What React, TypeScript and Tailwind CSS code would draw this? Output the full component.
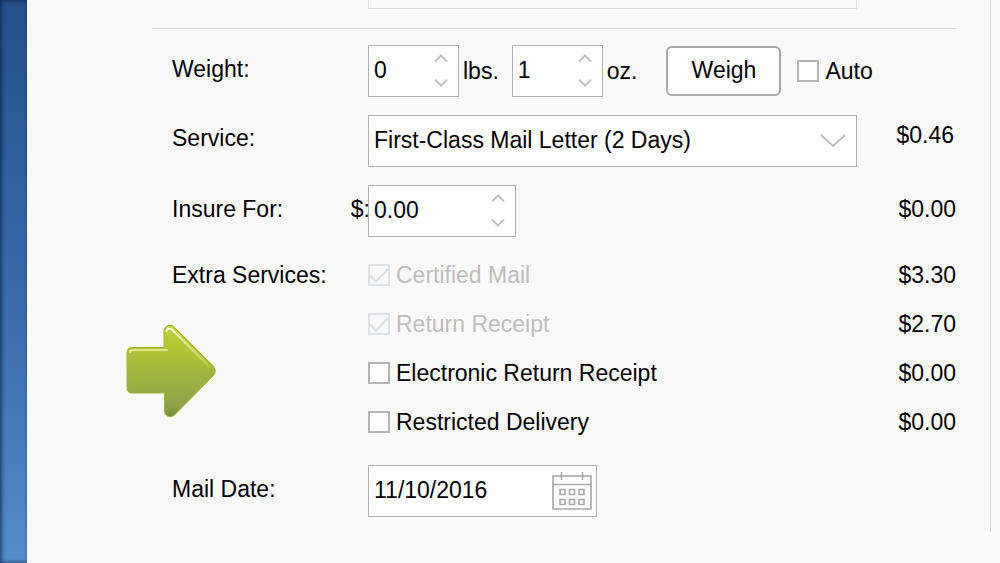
import { useState } from "react";

const SERVICES = ["First-Class Mail Letter (2 Days)", "Priority Mail (2 Days)"];

const EXTRAS = [
  { id: "certified", label: "Certified Mail", price: "$3.30", locked: true },
  { id: "return", label: "Return Receipt", price: "$2.70", locked: true },
  { id: "electronic", label: "Electronic Return Receipt", price: "$0.00", locked: false },
  { id: "restricted", label: "Restricted Delivery", price: "$0.00", locked: false },
];

const boxClass = "h-[52px] border border-[#b0b0b0] bg-white";
const inputClass = "h-full w-full min-w-0 flex-1 bg-transparent pb-0.5 pl-[5px] outline-none";
const rowClass = "grid grid-cols-[196px_minmax(0,1fr)_99px] items-center pl-5";

function Spinner({
  id,
  initial,
  digits = 0,
  className,
}: {
  id: string;
  initial: number;
  digits?: number;
  className: string;
}) {
  const [value, setValue] = useState(initial.toFixed(digits));

  function step(by: number) {
    setValue(Math.max(0, (Number(value) || 0) + by).toFixed(digits));
  }

  return (
    <div className={`flex shrink-0 ${boxClass} ${className}`}>
      <input
        id={id}
        type="text"
        inputMode="decimal"
        value={value}
        onChange={(event) => setValue(event.target.value)}
        className={inputClass}
      />
      <div className="flex w-[34px] shrink-0 flex-col pb-0.5">
        <button
          type="button"
          aria-label="Increase"
          onClick={() => step(1)}
          className="flex flex-1 items-center justify-center"
        >
          <svg width="14" height="9" viewBox="0 0 14 9" fill="none" stroke="#c2bfc2" strokeWidth="2">
            <path d="M1 7.5 7 1.5 13 7.5" />
          </svg>
        </button>
        <button
          type="button"
          aria-label="Decrease"
          onClick={() => step(-1)}
          className="flex flex-1 items-center justify-center"
        >
          <svg width="14" height="9" viewBox="0 0 14 9" fill="none" stroke="#c2bfc2" strokeWidth="2">
            <path d="M1 1.500 7 7.500 13 1.500" />
          </svg>
        </button>
      </div>
    </div>
  );
}

function Checkbox({ id, label, locked = false }: { id: string; label: string; locked?: boolean }) {
  return (
    <div className="flex items-center gap-1.5">
      <span className="relative size-[22px] shrink-0">
        <input
          id={id}
          type="checkbox"
          defaultChecked={locked}
          disabled={locked}
          className="peer block size-[22px] appearance-none border-2 border-[#b4b4b6] bg-white disabled:border-[#dfe2e4] disabled:bg-[#f9f9f9]"
        />
        <svg
          className="pointer-events-none absolute inset-0 hidden text-[#777777] peer-checked:block peer-disabled:text-[#dcdddd]"
          width="22"
          height="22"
          viewBox="0 0 22 22"
          fill="none"
          stroke="currentColor"
          strokeWidth="2"
        >
          <path d="M2 11.5 8 17.5 20 5" />
        </svg>
      </span>
      <label htmlFor={id} className={locked ? "text-[#bdbdbd]" : ""}>
        {label}
      </label>
    </div>
  );
}

function CalendarIcon() {
  return (
    <svg width="40" height="40" viewBox="0 0 40 40" fill="none" stroke="#a8a8a8">
      <path strokeWidth="1.6" d="M1 5h38v33H1zM1 13.500h38" />
      <path strokeWidth="1.6" d="M9.5 1v8M30.5 1v8" />
      <path
        strokeWidth="1.6"
        d="M8 18.5h5v5H8zM17.5 18.5h5v5h-5zM27 18.5h5v5h-5zM8 28.5h5v5H8zM17.5 28.5h5v5h-5zM27 28.5h5v5h-5z"
      />
    </svg>
  );
}

function Arrow() {
  return (
    <svg width="90" height="93" viewBox="0 0 90 93" fill="none" aria-hidden="true">
      <defs>
        <linearGradient id="arrowFill" x1="0" y1="0" x2="0" y2="1">
          <stop offset="0" stopColor="#bfd02f" />
          <stop offset="0.3" stopColor="#b0c338" />
          <stop offset="0.7" stopColor="#97ac42" />
          <stop offset="0.9" stopColor="#8ba045" />
          <stop offset="1" stopColor="#748a39" />
        </linearGradient>
        <linearGradient id="arrowShine" x1="0" y1="0" x2="1" y2="1">
          <stop offset="0" stopColor="#ffffff" />
          <stop offset="1" stopColor="#d5e070" stopOpacity="0.5" />
        </linearGradient>
      </defs>
      <path
        d="M6 22.5H38V6C38 1 44 -1.5 48 2L87 41Q91.500 46.500 87 51L49 89.500C44.500 94 38.500 91 38.500 86V68H6Q1 68 1 62.500V28Q1 22.500 6 22.500Z"
        fill="url(#arrowFill)"
        stroke="#a0b52c"
        strokeWidth="1"
      />
      <path d="M4 27Q4.500 25 7 25H41" stroke="#dbe58c" strokeWidth="2" strokeLinecap="round" />
      <path
        d="M40.500 6Q41.500 2.500 45.500 4L83 41"
        stroke="url(#arrowShine)"
        strokeWidth="2"
        strokeLinecap="round"
      />
    </svg>
  );
}

export default function App() {
  const [service, setService] = useState(SERVICES[0]);
  const [mailDate, setMailDate] = useState("11/10/2016");

  return (
    <div className="flex min-h-screen bg-[#f9f9f9] font-['Liberation_Sans',Arial,sans-serif] text-[23px] leading-7 text-black">
      <div className="w-[27px] shrink-0 bg-linear-to-b from-[#27508c] via-[#3869aa] to-[#558cca] shadow-[inset_4px_0_4px_-2px_rgba(10,30,60,0.5),inset_0_2px_3px_rgba(10,30,60,0.3),inset_0_-2px_3px_rgba(10,30,60,0.3)]" />

      <main className="min-w-0 flex-1 pr-[9px]">
        <form
          onSubmit={(event) => event.preventDefault()}
          className="border-r border-[#d6d6d6] pr-[34px] pb-[15px] pl-[125px]"
        >
          <div className={rowClass}>
            <div className="col-start-2 h-[9px] border-x border-b border-[#dddddd]" />
          </div>
          <hr className="mt-[19px] mb-4 border-t border-[#d8d8d8]" />

          <div className="flex flex-col gap-[18px]">
            <div className={rowClass}>
              <label htmlFor="pounds" className="pb-1">
                Weight:
              </label>
              <div className="flex items-center whitespace-nowrap">
                <Spinner id="pounds" initial={0} className="w-[91px]" />
                <label htmlFor="pounds" className="mr-[13px] ml-1">
                  lbs.
                </label>
                <Spinner id="ounces" initial={1} className="w-[91px]" />
                <label htmlFor="ounces" className="mr-[29px] ml-1">
                  oz.
                </label>
                <button
                  type="button"
                  className="mr-4 h-[50px] w-[115px] shrink-0 rounded-md border-2 border-[#a8a8a8] bg-white pb-0.5"
                >
                  Weigh
                </button>
                <Checkbox id="auto" label="Auto" />
              </div>
            </div>

            <div className={rowClass}>
              <label htmlFor="service" className="pb-1.5">
                Service:
              </label>
              <div className="relative">
                <select
                  id="service"
                  value={service}
                  onChange={(event) => setService(event.target.value)}
                  className={`w-full appearance-none pr-12 pb-0.5 pl-[5px] outline-none ${boxClass}`}
                >
                  {SERVICES.map((name) => (
                    <option key={name}>{name}</option>
                  ))}
                </select>
                <svg
                  className="pointer-events-none absolute top-[19px] right-[11px]"
                  width="26"
                  height="14"
                  viewBox="0 0 26 14"
                  fill="none"
                  stroke="#bdbdbd"
                  strokeWidth="2"
                >
                  <path d="M1 1 13 12 25 1" />
                </svg>
              </div>
              <output htmlFor="service" className="pr-0.5 pb-3 text-right">
                $0.46
              </output>
            </div>

            <div className={rowClass}>
              <label htmlFor="insured" className="-mr-0.5 flex justify-between pb-1">
                <span>Insure For:</span>
                <span>$:</span>
              </label>
              <div className="relative">
                <Spinner id="insured" initial={0} digits={2} className="w-[148px]" />
              </div>
              <output htmlFor="insured" className="pb-1 text-right">
                $0.00
              </output>
            </div>
          </div>

          <div role="group" aria-labelledby="extras" className="relative mt-[13px] mb-[19px]">
            {EXTRAS.map((extra, index) => (
              <div key={extra.id} className={`h-[49px] ${rowClass}`}>
                {index === 0 && <span id="extras">Extra Services:</span>}
                <div className="col-start-2">
                  <Checkbox id={extra.id} label={extra.label} locked={extra.locked} />
                </div>
                <output htmlFor={extra.id} className="text-right">
                  {extra.price}
                </output>
              </div>
            ))}
            {/* Callout laid over the form */}
            <div className="pointer-events-none absolute top-[75px] -left-[26px]">
              <Arrow />
            </div>
          </div>

          <div className={rowClass}>
            <label htmlFor="mailDate" className="pb-1">
              Mail Date:
            </label>
            <div className={`flex w-[229px] items-center ${boxClass}`}>
              <input
                id="mailDate"
                type="text"
                value={mailDate}
                onChange={(event) => setMailDate(event.target.value)}
                className={inputClass}
              />
              <button type="button" aria-label="Open calendar" className="mr-1 shrink-0">
                <CalendarIcon />
              </button>
            </div>
          </div>
        </form>
      </main>
    </div>
  );
}
